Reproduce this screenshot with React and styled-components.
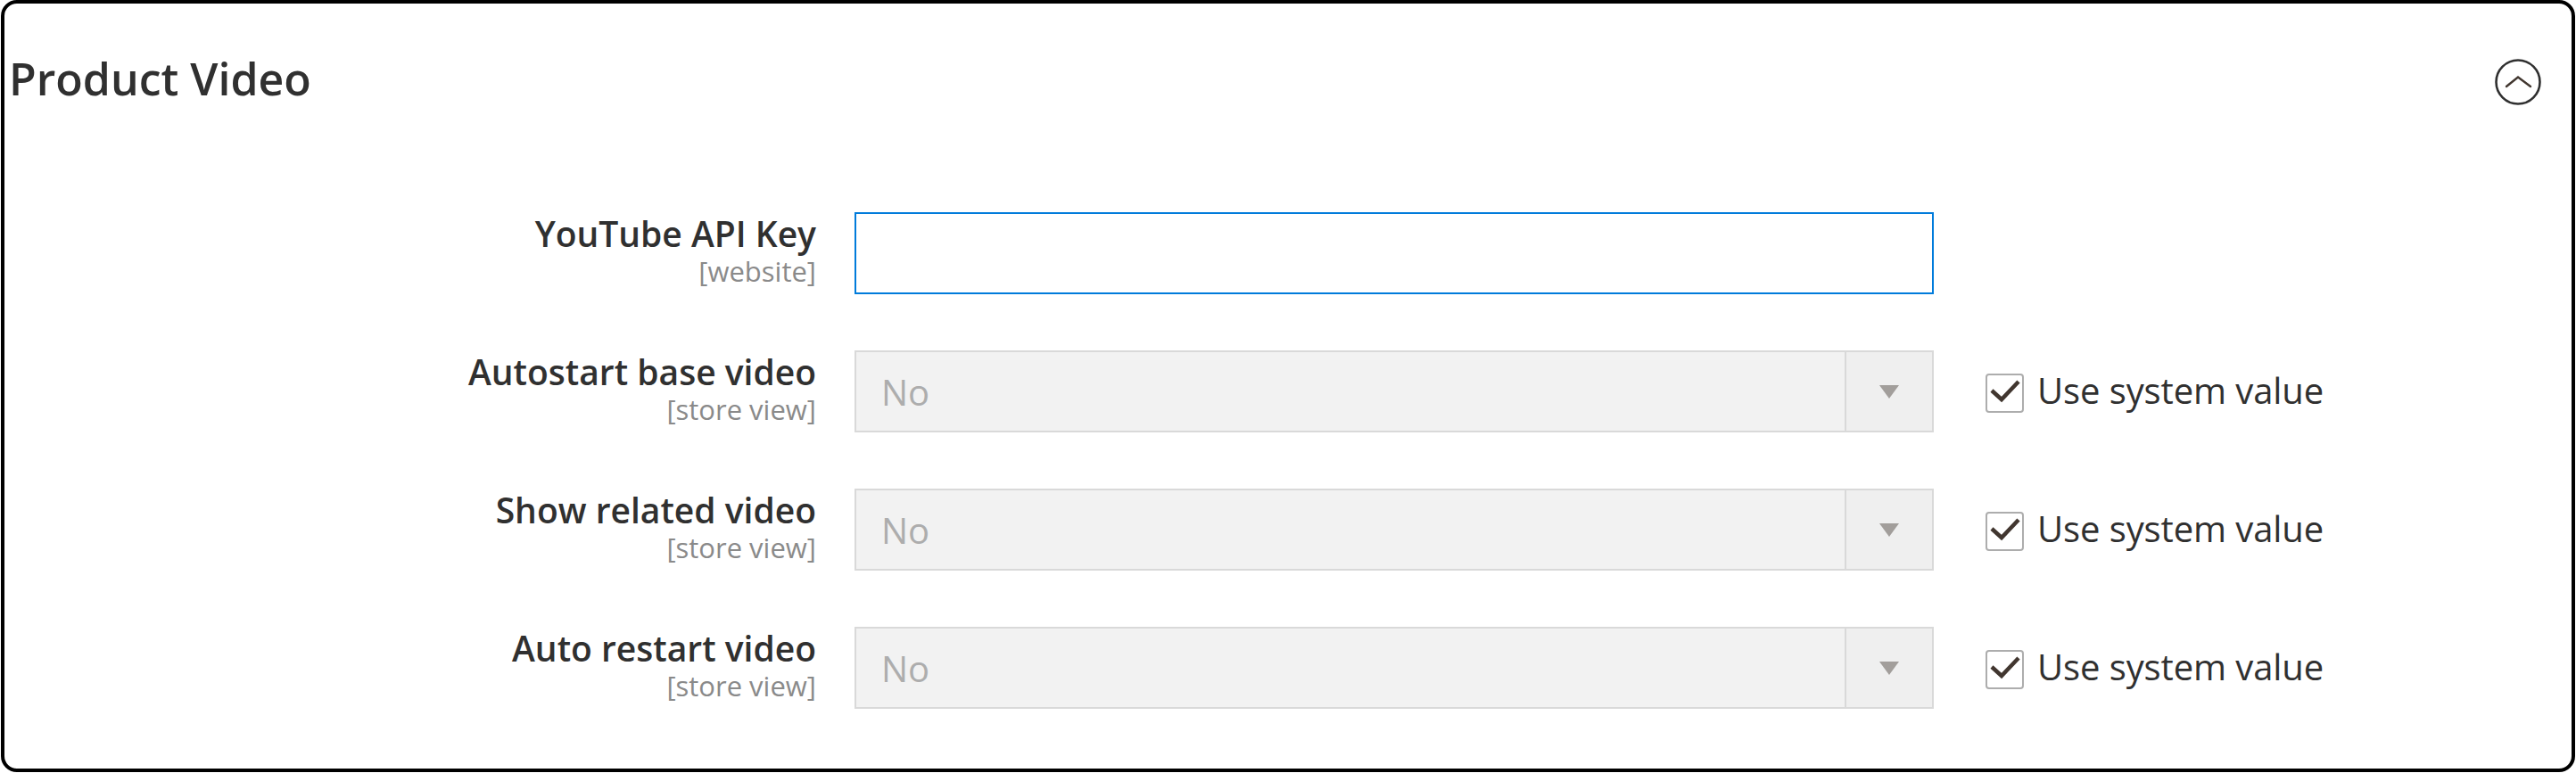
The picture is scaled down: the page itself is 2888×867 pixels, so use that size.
import React from "react";
import styled, { createGlobalStyle } from "styled-components";

const Global = createGlobalStyle`
  html, body { margin: 0; padding: 0; background: #ffffff; }
  body { font-family: "Open Sans", "Noto Sans", sans-serif; color: #303030; }
  * { box-sizing: border-box; }
`;

const Card = styled.section`
  margin-left: 1px;
  width: 2886px;
  height: 866px;
  border: 4px solid #000;
  border-radius: 18px;
  display: flex;
  flex-direction: column;
  background: #fff;
`;

const Header = styled.header`
  display: flex;
  align-items: flex-start;
  justify-content: space-between;
  padding: 55px 34px 0 5px;
`;

const Title = styled.h2`
  margin: 0;
  font-size: 50px;
  line-height: 58px;
  font-weight: 600;
  color: #303030;
`;

const Toggle = styled.button`
  margin-top: 7px;
  width: 52px;
  height: 52px;
  padding: 0;
  border: 0;
  background: transparent;
  display: flex;
  cursor: pointer;
`;

const Form = styled.div`
  margin-top: 120px;
  display: flex;
  flex-direction: column;
  gap: 63px;
`;

const Row = styled.div`
  display: flex;
  align-items: flex-start;
`;

const LabelCell = styled.div`
  flex: none;
  width: 910px;
  text-align: right;
  display: flex;
  flex-direction: column;
  align-items: flex-end;
`;

const Label = styled.label`
  font-size: 39px;
  line-height: 48px;
  font-weight: 600;
  color: #303030;
`;

const Scope = styled.span`
  font-size: 31px;
  line-height: 37px;
  color: #8a8a8a;
`;

const Control = styled.div`
  flex: none;
  margin-left: 43px;
  width: 1210px;
  height: 92px;
`;

const TextInput = styled.input`
  width: 100%;
  height: 100%;
  border: 2px solid #007bdb;
  border-radius: 0;
  outline: none;
  padding: 0 28px;
  font: inherit;
  font-size: 40px;
  color: #303030;
  background: #fff;
`;

const Select = styled.div`
  width: 100%;
  height: 100%;
  display: flex;
  border: 2px solid #d9d9d9;
  background: #f2f2f2;
`;

const SelectValue = styled.span`
  flex: 1;
  display: flex;
  align-items: center;
  padding-left: 28px;
  font-size: 40px;
  color: #adadad;
`;

const SelectArrow = styled.span`
  flex: none;
  width: 98px;
  border-left: 2px solid #d9d9d9;
  background: #efefef;
  display: flex;
  align-items: center;
  justify-content: center;
  &::after {
    content: "";
    width: 0;
    height: 0;
    border-left: 11px solid transparent;
    border-right: 11px solid transparent;
    border-top: 15px solid #a29e9b;
  }
`;

const SystemValue = styled.label`
  margin-left: 58px;
  height: 92px;
  display: flex;
  align-items: center;
  gap: 15px;
  font-size: 40px;
  line-height: 48px;
  color: #303030;
`;

const Box = styled.span`
  width: 43px;
  height: 44px;
  border: 2px solid #adadad;
  border-radius: 4px;
  display: flex;
  margin-top: 4px;
  background: #fff;
`;

const CheckText = styled.span`
  margin-top: -2px;
  letter-spacing: -0.1px;
`;

function ChevronCircle() {
  return (
    <svg width="52" height="52" viewBox="0 0 52 52" fill="none">
      <circle cx="26" cy="26" r="24.5" stroke="#303030" strokeWidth="2.6" />
      <path d="M13 31 L26 20.5 L40 31" stroke="#41362f" strokeWidth="2.4" strokeLinecap="round" strokeLinejoin="miter" />
    </svg>
  );
}

function Check() {
  return (
    <svg width="39" height="40" viewBox="0 0 39 40" fill="none">
      <path d="M5 17 L16 27 L35 7" stroke="#41362f" strokeWidth="4.5" strokeLinecap="butt" strokeLinejoin="miter" />
    </svg>
  );
}

const rows = [
  { label: "Autostart base video" },
  { label: "Show related video" },
  { label: "Auto restart video" },
];

export default function App() {
  return (
    <>
      <Global />
      <Card>
        <Header>
          <Title>Product Video</Title>
          <Toggle aria-label="Collapse">
            <ChevronCircle />
          </Toggle>
        </Header>
        <Form>
          <Row>
            <LabelCell>
              <Label>YouTube API Key</Label>
              <Scope>[website]</Scope>
            </LabelCell>
            <Control>
              <TextInput type="text" />
            </Control>
          </Row>
          {rows.map((r) => (
            <Row key={r.label}>
              <LabelCell>
                <Label>{r.label}</Label>
                <Scope>[store view]</Scope>
              </LabelCell>
              <Control>
                <Select>
                  <SelectValue>No</SelectValue>
                  <SelectArrow />
                </Select>
              </Control>
              <SystemValue>
                <Box>
                  <Check />
                </Box>
                <CheckText>Use system value</CheckText>
              </SystemValue>
            </Row>
          ))}
        </Form>
      </Card>
    </>
  );
}
